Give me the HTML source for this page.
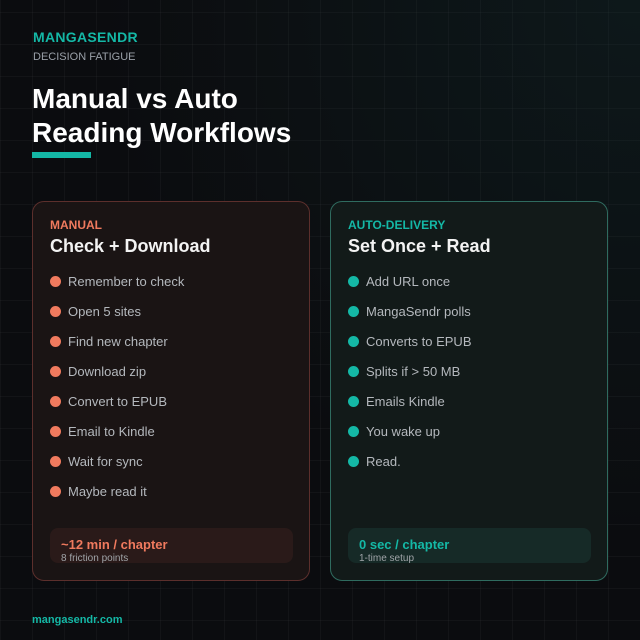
<!DOCTYPE html>
<html><head><style>
*{margin:0;padding:0;box-sizing:border-box}
body{width:640px;height:640px;overflow:hidden;font-family:"Liberation Sans",sans-serif;background:#0b0c0f;position:relative}
.bg{position:absolute;inset:0;background-image:linear-gradient(rgba(255,255,255,0.03) 1px,transparent 1px),linear-gradient(90deg,rgba(255,255,255,0.03) 1px,transparent 1px);background-size:32px 32px;background-position:0 12px}
.glow{position:absolute;inset:0;background:radial-gradient(circle at 100% 0%,rgba(20,60,60,0.25),transparent 60%)}
.abs{position:absolute}
.brand{left:33px;top:29px;color:#14b8a6;font-weight:bold;font-size:14px;letter-spacing:0.3px}
.sub{left:33px;top:51px;color:#9aa0a8;font-size:11px}
h1{position:absolute;left:32px;top:82px;color:#fff;font-size:28px;line-height:34px;font-weight:bold}
.bar{left:32px;top:152px;width:59px;height:6px;background:#14b8a6}
.card{position:absolute;top:201px;width:278px;height:380px;border-radius:12px;border:1.5px solid}
.l{left:32px;background:#1a1414;border-color:#5c2f2c}
.r{left:330px;background:#121a19;border-color:#2f6b5f}
.tag{position:absolute;left:17px;top:16px;font-size:12px;font-weight:bold}
.ct{position:absolute;left:17px;top:34px;font-size:18px;font-weight:bold;color:#f3f3f3}
ul{position:absolute;left:17px;top:64px;list-style:none}
li{font-size:13px;color:#b4b8bd;display:flex;align-items:center;height:30px}
li i{width:11px;height:11px;border-radius:50%;margin-right:7px;display:inline-block}
.fb{position:absolute;left:17px;top:326px;width:243px;height:35px;border-radius:8px}
.fb b{position:absolute;left:11px;top:9px;font-size:13px}
.fb span{position:absolute;left:11px;top:25px;font-size:10px;color:#a0a4a8}
.foot{left:32px;top:614px;color:#14b8a6;font-size:11px;font-weight:bold}
</style></head><body>
<div class="bg"></div><div class="glow"></div>
<div class="abs brand">MANGASENDR</div>
<div class="abs sub">DECISION FATIGUE</div>
<h1>Manual vs Auto<br>Reading Workflows</h1>
<div class="abs bar"></div>
<div class="card l">
<div class="tag" style="color:#f07a5e">MANUAL</div>
<div class="ct">Check + Download</div>
<ul>
<li><i style="background:#f07a5e"></i>Remember to check</li>
<li><i style="background:#f07a5e"></i>Open 5 sites</li>
<li><i style="background:#f07a5e"></i>Find new chapter</li>
<li><i style="background:#f07a5e"></i>Download zip</li>
<li><i style="background:#f07a5e"></i>Convert to EPUB</li>
<li><i style="background:#f07a5e"></i>Email to Kindle</li>
<li><i style="background:#f07a5e"></i>Wait for sync</li>
<li><i style="background:#f07a5e"></i>Maybe read it</li>
</ul>
<div class="fb" style="background:#2a1a19"><b style="color:#f07a5e">~12 min / chapter</b><span>8 friction points</span></div>
</div>
<div class="card r">
<div class="tag" style="color:#14b8a6">AUTO-DELIVERY</div>
<div class="ct">Set Once + Read</div>
<ul>
<li><i style="background:#14b8a6"></i>Add URL once</li>
<li><i style="background:#14b8a6"></i>MangaSendr polls</li>
<li><i style="background:#14b8a6"></i>Converts to EPUB</li>
<li><i style="background:#14b8a6"></i>Splits if &gt; 50 MB</li>
<li><i style="background:#14b8a6"></i>Emails Kindle</li>
<li><i style="background:#14b8a6"></i>You wake up</li>
<li><i style="background:#14b8a6"></i>Read.</li>
</ul>
<div class="fb" style="background:#162a27"><b style="color:#14b8a6">0 sec / chapter</b><span>1-time setup</span></div>
</div>
<div class="abs foot">mangasendr.com</div>
</body></html>
